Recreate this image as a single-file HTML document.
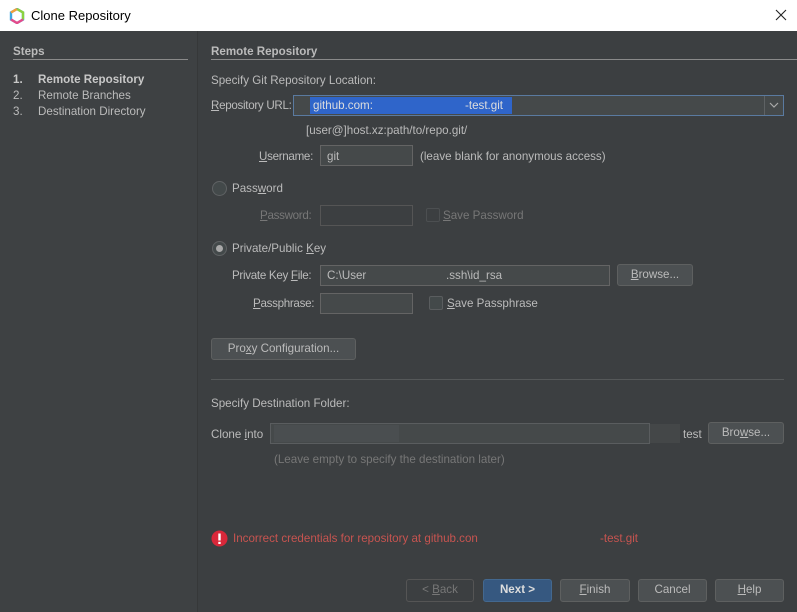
<!DOCTYPE html>
<html><head><meta charset="utf-8"><style>
*{box-sizing:border-box;margin:0;padding:0}
body{width:797px;height:612px;overflow:hidden;background:#3c3f41;font-family:"Liberation Sans",sans-serif;font-size:11.6px;color:#bbbbbb;position:relative}
.a{position:absolute;white-space:nowrap}
.title{left:0;top:0;width:797px;height:31px;background:#fff;color:#000;font-size:13px}
.side{left:0;top:31px;width:198px;height:581px;background:#3e4143;border-right:1px solid #363839}
.f{position:absolute;background:#45494a;border:1px solid #646464}
.btn{position:absolute;background:#4c5052;border:1px solid #5e6060;border-radius:3px;text-align:center;color:#bbb;line-height:20px}
u{text-decoration:underline}
.dis{color:#777}
.cb{position:absolute;width:14px;height:14px;border:1px solid #5a5d5f;background:#43494a;border-radius:2px}
.rad{position:absolute;width:15px;height:15px;border-radius:50%;border:1px solid #5f6264;background:#43494a}
</style></head><body>
<div class="a title">
<svg style="position:absolute;left:9px;top:8px" width="16" height="16" viewBox="0 0 16 16"><polygon points="8,1 14,4.5 14,11.5 8,15 2,11.5 2,4.5" fill="none" stroke="#3fa7e0" stroke-width="2.4"/><path d="M8 1 L14 4.5 L14 11.5" fill="none" stroke="#8cd23f" stroke-width="2.4"/><path d="M2 11.5 L8 15 L14 11.5" fill="none" stroke="#e64a8a" stroke-width="2.4"/><path d="M2 4.5 L8 1" fill="none" stroke="#f2a03a" stroke-width="2.4"/></svg>
<span class="a" style="left:31px;top:8px">Clone Repository</span>
<svg class="a" style="left:775px;top:9px" width="12" height="12"><path d="M1 1 L11 11 M11 1 L1 11" stroke="#222" stroke-width="1.1"/></svg>
</div>
<div class="a side"></div>
<div class="a" style="left:13px;top:45px;font-weight:bold">Steps</div>
<div class="a" style="left:13px;top:59px;width:175px;height:1px;background:#8a8a8a"></div>
<div class="a" style="left:13px;top:73px;font-weight:bold;color:#c8c8c8">1.</div><div class="a" style="left:38px;top:73px;font-weight:bold;color:#c8c8c8">Remote Repository</div>
<div class="a" style="left:13px;top:89px">2.</div><div class="a" style="left:38px;top:89px">Remote Branches</div>
<div class="a" style="left:13px;top:105px">3.</div><div class="a" style="left:38px;top:105px">Destination Directory</div>

<div class="a" style="left:211px;top:45px;font-weight:bold">Remote Repository</div>
<div class="a" style="left:211px;top:59px;width:586px;height:1px;background:#8a8a8a"></div>
<div class="a" style="left:211px;top:74px">Specify Git Repository Location:</div>
<div class="a" style="left:211px;top:99px;letter-spacing:-0.3px"><u>R</u>epository URL:</div>
<div class="f" style="left:293px;top:95px;width:491px;height:21px;border-color:#5a7aa0"></div>
<div class="a" style="left:310px;top:97px;width:202px;height:17px;background:#2f65ca"></div>
<div class="a" style="left:313px;top:99px;color:#ddd">github.com:</div>
<div class="a" style="left:465px;top:99px;color:#ddd">-test.git</div>
<div class="a" style="left:764px;top:96px;width:1px;height:19px;background:#5e6264"></div>
<svg class="a" style="left:768px;top:100px" width="12" height="10"><path d="M2 3 L6 7 L10 3" fill="none" stroke="#aaa" stroke-width="1.2"/></svg>
<div class="a" style="left:306px;top:124px">[user@]host.xz:path/to/repo.git/</div>
<div class="a" style="left:259px;top:150px;letter-spacing:-0.3px"><u>U</u>sername:</div>
<div class="f" style="left:320px;top:145px;width:93px;height:21px"></div>
<div class="a" style="left:327px;top:150px">git</div>
<div class="a" style="left:420px;top:150px">(leave blank for anonymous access)</div>

<div class="rad" style="left:212px;top:181px"></div>
<div class="a" style="left:232px;top:182px">Pass<u>w</u>ord</div>
<div class="a dis" style="left:260px;top:209px;letter-spacing:-0.3px"><u>P</u>assword:</div>
<div class="f" style="left:320px;top:205px;width:93px;height:21px;background:#3c3f41;border-color:#555"></div>
<div class="cb" style="left:426px;top:208px;border-color:#4c4f51;background:#3c3f41"></div>
<div class="a dis" style="left:443px;top:209px"><u>S</u>ave Password</div>

<div class="rad" style="left:212px;top:241px"></div>
<div class="a" style="left:216px;top:245px;width:7px;height:7px;border-radius:50%;background:#a9a9a9"></div>
<div class="a" style="left:232px;top:242px">Private/Public <u>K</u>ey</div>
<div class="a" style="left:232px;top:269px;letter-spacing:-0.3px">Private Key <u>F</u>ile:</div>
<div class="f" style="left:320px;top:265px;width:290px;height:21px"></div>
<div class="a" style="left:327px;top:269px">C:\User</div>
<div class="a" style="left:446px;top:269px">.ssh\id_rsa</div>
<div class="btn" style="left:617px;top:264px;width:76px;height:22px"><u>B</u>rowse...</div>
<div class="a" style="left:253px;top:297px;letter-spacing:-0.3px"><u>P</u>assphrase:</div>
<div class="f" style="left:320px;top:293px;width:93px;height:21px"></div>
<div class="cb" style="left:429px;top:296px"></div>
<div class="a" style="left:447px;top:297px"><u>S</u>ave Passphrase</div>

<div class="btn" style="left:211px;top:338px;width:145px;height:22px">Pro<u>x</u>y Configuration...</div>
<div class="a" style="left:211px;top:379px;width:573px;height:1px;background:#555859"></div>
<div class="a" style="left:211px;top:397px">Specify Destination Folder:</div>
<div class="a" style="left:211px;top:428px">Clone <u>i</u>nto</div>
<div class="f" style="left:270px;top:423px;width:380px;height:21px;border-color:#5a5d5f"></div>
<div class="a" style="left:274px;top:425px;width:125px;height:17px;background:#4a4e50"></div>
<div class="a" style="left:650px;top:424px;width:30px;height:19px;background:#444748"></div>
<div class="a" style="left:683px;top:428px">test</div>
<div class="btn" style="left:708px;top:422px;width:76px;height:22px">Bro<u>w</u>se...</div>
<div class="a dis" style="left:274px;top:453px">(Leave empty to specify the destination later)</div>

<svg class="a" style="left:211px;top:530px" width="17" height="17"><circle cx="8.5" cy="8.5" r="8" fill="#d9283a"/><rect x="7.3" y="3.5" width="2.4" height="7" fill="#fff"/><rect x="7.3" y="11.8" width="2.4" height="2.2" fill="#fff"/></svg>
<div class="a" style="left:233px;top:532px;color:#c75450">Incorrect credentials for repository at github.con</div>
<div class="a" style="left:600px;top:532px;color:#c75450">-test.git</div>

<div class="btn" style="left:406px;top:579px;width:68px;height:23px;background:#3c3f41;color:#777;border-color:#555">&lt; <u>B</u>ack</div>
<div class="btn" style="left:483px;top:579px;width:69px;height:23px;background:#365880;border-color:#43688f;color:#ddd;font-weight:bold">Next &gt;</div>
<div class="btn" style="left:560px;top:579px;width:70px;height:23px"><u>F</u>inish</div>
<div class="btn" style="left:638px;top:579px;width:69px;height:23px">Cancel</div>
<div class="btn" style="left:715px;top:579px;width:69px;height:23px"><u>H</u>elp</div>
</body></html>
